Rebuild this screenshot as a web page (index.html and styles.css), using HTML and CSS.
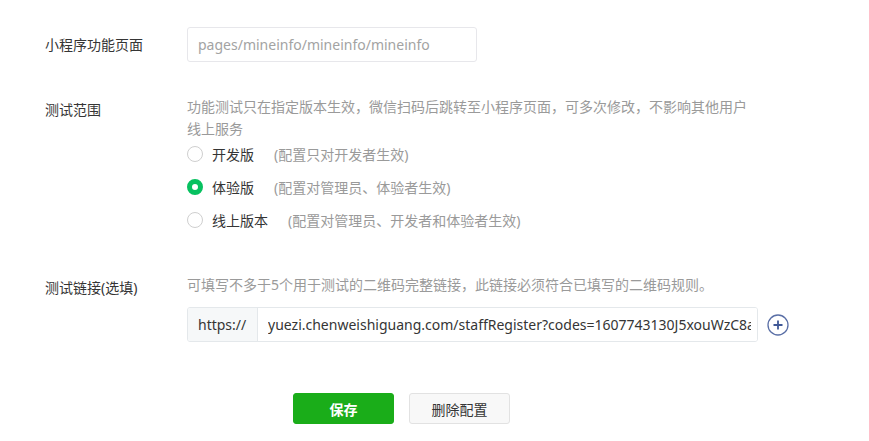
FILE: index.html
```html
<!DOCTYPE html>
<html lang="zh-CN">
<head>
    <meta charset="UTF-8">
    <title>功能页面配置</title>
    <link rel="stylesheet" href="styles.css">
</head>
<body>
<!-- Formular für Funktionstest -->
<div class="formBox">
    <!-- Seite -->
    <div class="formZeile zeileSeite">
        <label class="formLabel labelMitte">小程序功能页面</label>
        <div class="formFeld">
            <input type="text" class="textFeld seitenFeld" placeholder="pages/mineinfo/mineinfo/mineinfo">
        </div>
    </div>

    <!-- Testbereich -->
    <div class="formZeile zeileBereich">
        <label class="formLabel labelOben">测试范围</label>
        <div class="formFeld">
            <p class="hinweis bereichHinweis">功能测试只在指定版本生效，微信扫码后跳转至小程序页面，可多次修改，不影响其他用户线上服务</p>
            <div class="radioListe">
                <label class="radioZeile">
                    <span class="radioKreis"></span>
                    <span class="radioText">开发版</span>
                    <span class="radioHinweis">(配置只对开发者生效)</span>
                </label>
                <label class="radioZeile">
                    <span class="radioKreis aktiv"></span>
                    <span class="radioText">体验版</span>
                    <span class="radioHinweis">(配置对管理员、体验者生效)</span>
                </label>
                <label class="radioZeile">
                    <span class="radioKreis"></span>
                    <span class="radioText">线上版本</span>
                    <span class="radioHinweis">(配置对管理员、开发者和体验者生效)</span>
                </label>
            </div>
        </div>
    </div>

    <!-- Testlink -->
    <div class="formZeile zeileLink">
        <label class="formLabel labelOben">测试链接(选填)</label>
        <div class="formFeld">
            <p class="hinweis">可填写不多于5个用于测试的二维码完整链接，此链接必须符合已填写的二维码规则。</p>
            <div class="linkZeile">
                <div class="linkGruppe">
                    <span class="linkPrefix">https://</span>
                    <input type="text" class="linkFeld" value="yuezi.chenweishiguang.com/staffRegister?codes=1607743130J5xouWzC8aKp">
                </div>
                <!-- Link hinzufügen -->
                <button class="plusTaste" title="添加">
                    <svg width="22" height="22" viewBox="0 0 22 22">
                        <circle cx="11" cy="11" r="10" fill="none" stroke="#5a6fa6" stroke-width="1.3"/>
                        <path d="M11 6.5v9M6.5 11h9" stroke="#3f5896" stroke-width="1.8" fill="none"/>
                    </svg>
                </button>
            </div>
        </div>
    </div>

    <!-- Tasten -->
    <div class="tastenZeile">
        <button class="knopf knopfPrimaer">保存</button>
        <button class="knopf knopfNormal">删除配置</button>
    </div>
</div>
</body>
</html>
```

FILE: styles.css
```css
/* Grundlayout */
body {
    margin: 0;
    background-color: #fff;
    font-family: "Noto Sans", "Noto Sans CJK SC", sans-serif;
    font-size: 14px;
    color: #353535;
}

.formBox {
    padding: 27px 0 0 45px;
}

/* Zeilen im Formular */
.formZeile {
    display: flex;
}

.zeileBereich {
    margin-top: 34px;
}

.zeileLink {
    margin-top: 43px;
}

.formLabel {
    width: 142px;
    flex-shrink: 0;
    line-height: 22px;
}

.labelMitte {
    line-height: 35px;
}

.labelOben {
    padding-top: 3px;
}

.formFeld {
    display: flex;
    flex-direction: column;
}

/* Eingabefelder */
.textFeld {
    box-sizing: border-box;
    height: 35px;
    padding: 0 10px;
    border: 1px solid #e7e7eb;
    border-radius: 3px;
    font: inherit;
    color: #353535;
    outline: none;
}

.textFeld::placeholder {
    color: #a3a3a3;
}

.seitenFeld {
    width: 290px;
}

/* Hinweistexte */
.hinweis {
    margin: 0;
    width: 562px;
    line-height: 22px;
    color: #9a9a9a;
}

/* Radio-Auswahl */
.radioListe {
    display: flex;
    flex-direction: column;
    gap: 11px;
    margin-top: 3px;
}

.radioZeile {
    display: flex;
    align-items: center;
    height: 22px;
    cursor: pointer;
}

.radioKreis {
    box-sizing: border-box;
    width: 16px;
    height: 16px;
    border: 1px solid #cfcfcf;
    border-radius: 50%;
    background-color: #fff;
}

.radioKreis.aktiv {
    border: 5px solid #07c160; /* gruener Ring */
}

.radioText {
    margin-left: 9px;
    color: #353535;
}

.radioHinweis {
    margin-left: 20px;
    color: #9a9a9a;
}

/* Testlink */
.linkZeile {
    display: flex;
    align-items: center;
    margin-top: 11px;
}

.linkGruppe {
    display: flex;
    width: 571px;
    height: 35px;
    box-sizing: border-box;
    border: 1px solid #e4e8eb;
    border-radius: 3px;
    overflow: hidden;
}

.linkPrefix {
    width: 70px;
    flex-shrink: 0;
    padding-left: 10px;
    box-sizing: border-box;
    line-height: 33px;
    background-color: #f6f8f9;
    border-right: 1px solid #e4e8eb;
    color: #353535;
}

.linkFeld {
    flex: 1;
    min-width: 0;
    border: none;
    padding: 0 6px 0 10px;
    font: inherit;
    color: #353535;
    outline: none;
}

.plusTaste {
    margin-left: 9px;
    padding: 0;
    border: none;
    background: none;
    width: 22px;
    height: 22px;
    cursor: pointer;
}

/* Tasten unten */
.tastenZeile {
    display: flex;
    gap: 15px;
    margin-top: 51px;
    padding-left: 248px;
}

.knopf {
    box-sizing: border-box;
    width: 101px;
    height: 31px;
    border-radius: 3px;
    font: inherit;
    cursor: pointer;
}

.knopfPrimaer {
    border: 1px solid #1aad19;
    background-color: #1aad19;
    color: #fff;
    font-weight: bold;
}

.knopfNormal {
    border: 1px solid #e2e2e2;
    background-color: #f8f8f8;
    color: #353535;
}
```
